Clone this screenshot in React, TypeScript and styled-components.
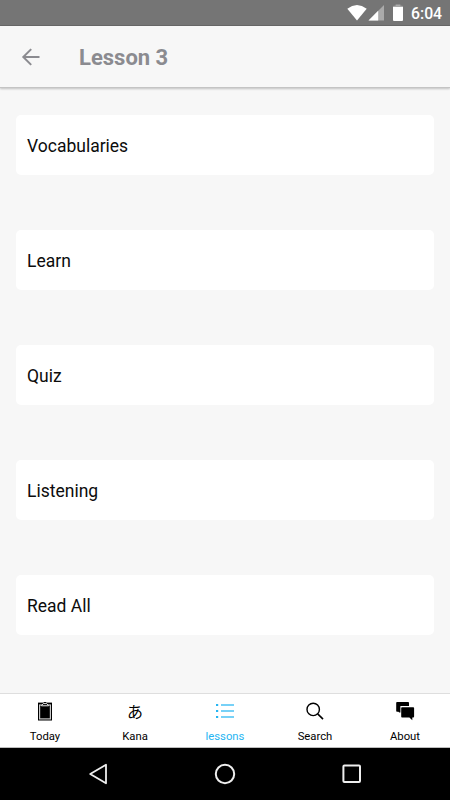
import React from "react";
import styled, { createGlobalStyle } from "styled-components";

const GlobalStyle = createGlobalStyle`
  * { box-sizing: border-box; }
  body { margin: 0; background: #f7f7f7; font-family: Roboto, "Noto Sans CJK JP", sans-serif; }
`;

const Screen = styled.div`
  width: 450px;
  height: 800px;
  display: flex;
  flex-direction: column;
  background: #f7f7f7;
  overflow: hidden;
`;

const StatusBar = styled.div`
  height: 26px;
  flex: none;
  background: #757575;
  border-bottom: 1px solid #686868;
  display: flex;
  justify-content: flex-end;
  padding-right: 8px;
`;

const StatusIcons = styled.svg`
  width: 64px;
  height: 25px;
  display: block;
`;

const Clock = styled.span`
  width: 31px;
  color: #fff;
  font-size: 15.8px;
  font-weight: 500;
  line-height: 28px;
  white-space: nowrap;
`;

const Header = styled.header`
  height: 62px;
  flex: none;
  display: flex;
  align-items: center;
  padding-left: 21px;
  background: #f7f7f7;
  border-bottom: 1px solid #c4c4c4;
  box-shadow: 0 1px 2px rgba(0, 0, 0, 0.22);
`;

const BackButton = styled.button`
  width: 20px;
  height: 20px;
  padding: 0;
  border: 0;
  background: none;
  svg { display: block; }
`;

const Title = styled.h1`
  margin: 2px 0 0 38px;
  font-size: 22px;
  font-weight: 700;
  line-height: 28px;
  color: #8b8b90;
`;

const LessonList = styled.main`
  flex: 1;
  display: flex;
  flex-direction: column;
  gap: 54.9px;
  padding: 27px 16px 0;
`;

const LessonCard = styled.div`
  height: 60px;
  flex: none;
  display: flex;
  align-items: center;
  padding: 2px 11px 0;
  border-radius: 5px;
  background: #fff;
  color: #0c0c0c;
  font-size: 17.5px;
`;

const TabBar = styled.nav`
  height: 55px;
  flex: none;
  display: grid;
  grid-template-columns: repeat(5, 1fr);
  background: #fff;
  border-top: 1px solid #dedede;
  border-bottom: 1px solid #bdbdbd;
`;

const Tab = styled.div<{ $active?: boolean }>`
  display: flex;
  flex-direction: column;
  align-items: center;
  padding-top: 7px;
  color: ${(p) => (p.$active ? "#26b5f2" : "#000")};
`;

const TabIcon = styled.div`
  width: 20px;
  height: 20px;
  svg { display: block; }
`;

const KanaGlyph = styled.div`
  font-family: "Noto Sans CJK JP", sans-serif;
  font-size: 16px;
  line-height: 21px;
  text-align: center;
`;

const TabLabel = styled.span`
  margin-top: 8px;
  font-size: 11.3px;
  line-height: 16px;
`;

const SystemNav = styled.div`
  height: 52px;
  flex: none;
  display: flex;
  justify-content: space-between;
  align-items: center;
  padding: 0 88px;
  background: #000;
  svg { display: block; }
`;

const TodayIcon = () => (
  <svg width="20" height="20" viewBox="0 0 20 20">
    <rect x="3" y="1.6" width="14" height="17.9" fill="#000" />
    <rect x="4.6" y="4" width="10.8" height="13.9" fill="#000" stroke="#c9c9c9" strokeWidth="1.2" />
    <path d="M6.4 4.8 8.2 2.6h3.6l1.8 2.2z" fill="#000" stroke="#e4e4e4" strokeWidth="1" />
    <path d="M8.5 2.1 9.2.9h1.6l.7 1.2z" fill="#000" />
  </svg>
);

const LessonsIcon = () => (
  <svg width="20" height="20" viewBox="0 0 20 20">
    {[4, 10, 16].map((y) => (
      <g key={y}>
        <rect x="1" y={y - 1} width="2.2" height="2" fill="#26b5f2" />
        <path d={`M6 ${y}H19`} stroke="#55c6f5" strokeWidth="1.6" />
      </g>
    ))}
  </svg>
);

const SearchIcon = () => (
  <svg width="20" height="20" viewBox="0 0 20 20" fill="none" stroke="#000">
    <circle cx="8.2" cy="8.4" r="6.2" strokeWidth="1.4" />
    <path d="m12.7 12.9 5.3 5.2" strokeWidth="1.6" />
  </svg>
);

const AboutIcon = () => (
  <svg width="20" height="20" viewBox="0 0 20 20">
    <path d="M2 1.1h11.2q.8 0 .8.8v3.2H5.4v6.4H4.2l-.8-.8H2q-.8 0-.8-.8V1.9q0-.8.8-.8z" fill="#000" />
    <path d="M7 6.2h11.2q.9 0 .9.9v8.4q0 .9-.9.9h-.9v2.9l-2.9-2.9H7q-.8 0-.8-.9V7.1q0-.9.8-.9z" fill="#000" />
  </svg>
);

const tabs = [
  { label: "Today", icon: <TodayIcon /> },
  { label: "Kana", icon: <KanaGlyph>あ</KanaGlyph> },
  { label: "lessons", icon: <LessonsIcon />, active: true },
  { label: "Search", icon: <SearchIcon /> },
  { label: "About", icon: <AboutIcon /> },
];

const lessons = ["Vocabularies", "Learn", "Quiz", "Listening", "Read All"];

export default function App() {
  return (
    <Screen>
      <GlobalStyle />
      <StatusBar>
        <StatusIcons viewBox="0 0 64 25">
          <path d="M.3 8.7Q10 1.3 19.7 8.7L10 20.4z" fill="#fff" />
          <path d="M37 5v15.5H21.5z" fill="#aaa" />
          <path d="M31.2 10.8v9.7h-9.7z" fill="#fff" />
          <path d="M46 6.8h10V20q0 1-1 1h-8q-1 0-1-1z" fill="#fff" />
          <path d="M46 6.8q0-1 1-1h1.6V4.6h4.8v1.2H55q1 0 1 1z" fill="#aaa" />
        </StatusIcons>
        <Clock>6:04</Clock>
      </StatusBar>
      <Header>
        <BackButton aria-label="Back">
          <svg width="20" height="20" viewBox="0 0 20 20" fill="none" stroke="#8b8b90" strokeWidth="2">
            <path d="M18.5 10H2.5M10.2 2.1 2.3 10l7.9 7.9" />
          </svg>
        </BackButton>
        <Title>Lesson 3</Title>
      </Header>
      <LessonList>
        {lessons.map((name) => (
          <LessonCard key={name}>{name}</LessonCard>
        ))}
      </LessonList>
      <TabBar>
        {tabs.map((t) => (
          <Tab key={t.label} $active={t.active}>
            <TabIcon>{t.icon}</TabIcon>
            <TabLabel>{t.label}</TabLabel>
          </Tab>
        ))}
      </TabBar>
      <SystemNav>
        <svg width="20" height="22" viewBox="0 0 20 22" fill="none" stroke="#eee" strokeWidth="1.8">
          <path d="M18 1.7v18.6L2.2 11z" strokeLinejoin="round" />
        </svg>
        <svg width="22" height="22" viewBox="0 0 22 22" fill="none" stroke="#eee" strokeWidth="2">
          <circle cx="11" cy="11" r="9.2" />
        </svg>
        <svg width="20" height="20" viewBox="0 0 20 20" fill="none" stroke="#eee" strokeWidth="2">
          <rect x="1.4" y="1.5" width="16.6" height="16.6" rx="1" />
        </svg>
      </SystemNav>
    </Screen>
  );
}
